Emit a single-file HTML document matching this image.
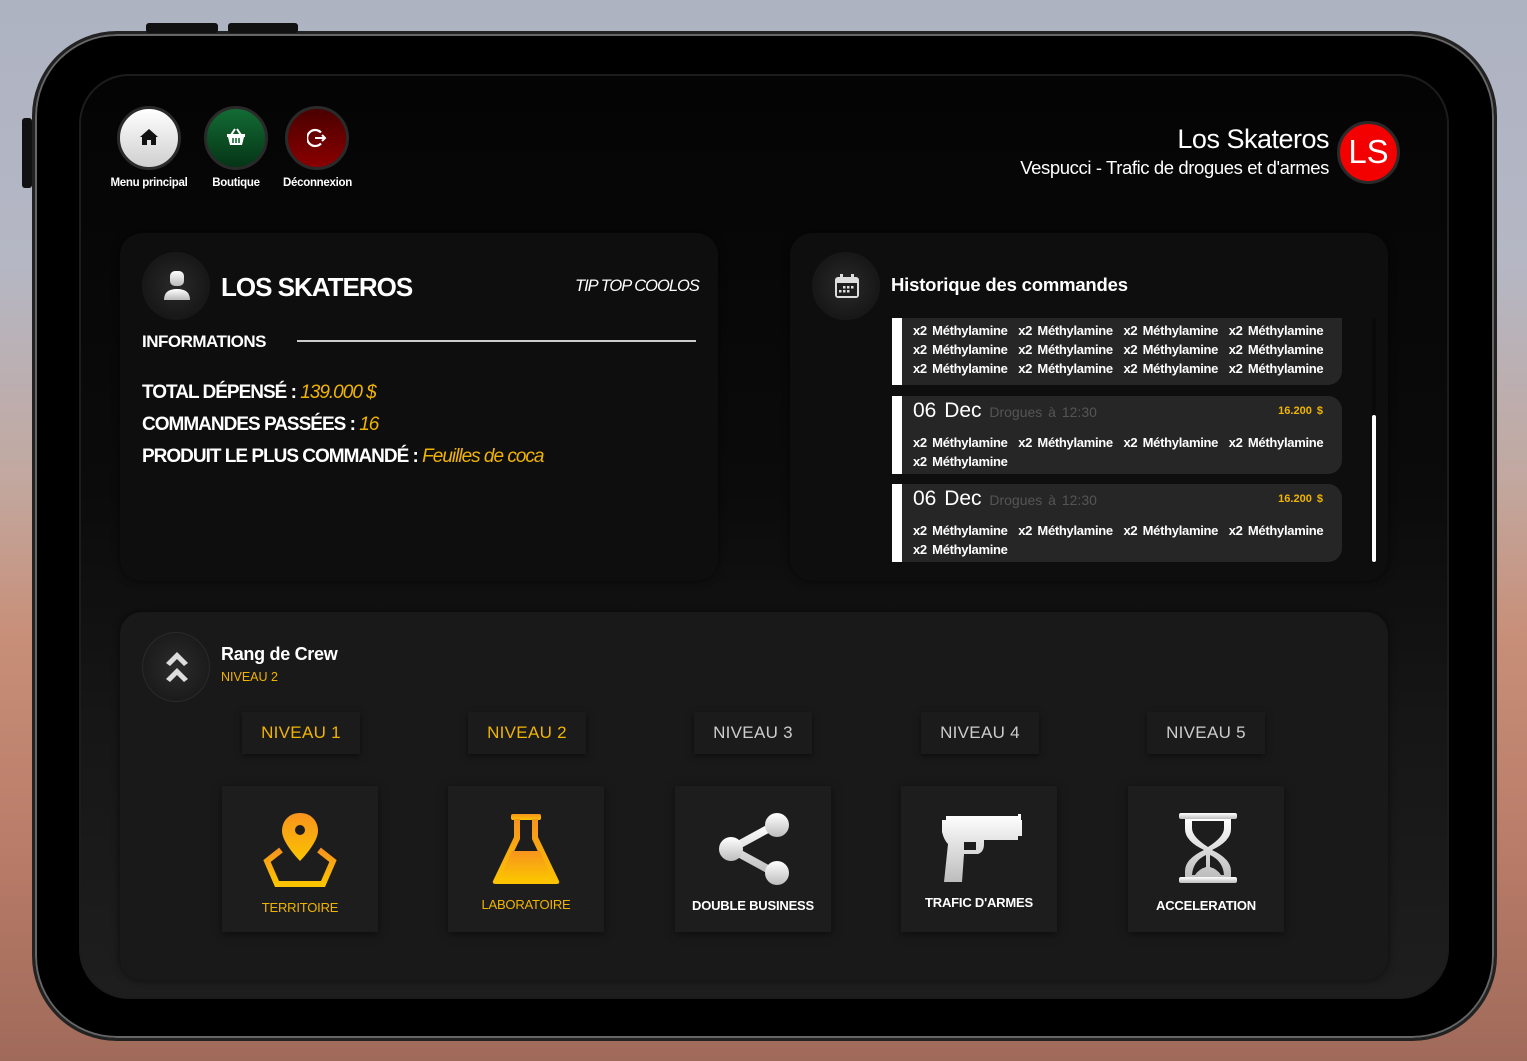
<!DOCTYPE html>
<html><head><meta charset="utf-8">
<style>
*{margin:0;padding:0;box-sizing:border-box}
body{width:1527px;height:1061px;overflow:hidden;position:relative;font-family:"Liberation Sans",sans-serif;
background:linear-gradient(180deg,#aeb3c2 0%,#b5b7c4 25%,#c2a8a0 45%,#c88f78 60%,#b97c68 80%,#a06a5a 100%);}
.abs{position:absolute}
.tablet{left:32px;top:31px;width:1465px;height:1010px;border-radius:85px;background:#000;border:3px solid #222;box-shadow:0 0 0 2px #666 inset}
.screen{left:79px;top:74px;width:1370px;height:925px;border-radius:50px;background:linear-gradient(180deg,#040404 0%,#0b0b0b 45%,#161616 70%,#1e1e1e 100%);border:2px solid #1c1c1c}
.panel{border-radius:22px;background:#0e0e0e;box-shadow:0 0 8px rgba(0,0,0,.6)}
.circ{border-radius:50%;border:3px solid #2a2a2a}
.lbl{color:#fff;font-weight:bold;font-size:11.5px;text-align:center;letter-spacing:-.3px}
.w{color:#fff}
.y{color:#f0b400}
.item{position:absolute;left:892px;width:450px;background:#262626;border-radius:0 14px 14px 0;border-left:10px solid #fff;padding:0 0 0 11px;color:#fff;font-weight:bold;font-size:13px;line-height:19px;letter-spacing:-.3px;word-spacing:2px}
.niv{position:absolute;top:712px;width:118px;height:42px;background:#1b1b1b;box-shadow:0 2px 6px rgba(0,0,0,.5);font-size:17px;text-align:center;line-height:42px;letter-spacing:.3px}
.card{position:absolute;top:786px;width:156px;height:146px;background:#1d1d1d;box-shadow:0 2px 8px rgba(0,0,0,.5)}
.card span{position:absolute;left:0;right:0;text-align:center;font-size:13px;font-weight:bold;letter-spacing:-.2px}
</style></head><body>
<div class="abs tablet"></div>
<div class="abs" style="left:22px;top:118px;width:10px;height:70px;background:#111;border-radius:3px"></div>
<div class="abs" style="left:146px;top:23px;width:72px;height:10px;background:#111;border-radius:3px"></div>
<div class="abs" style="left:228px;top:23px;width:70px;height:10px;background:#111;border-radius:3px"></div>
<div class="abs screen"></div>

<div class="abs circ" style="left:117px;top:106px;width:64px;height:64px;background:linear-gradient(#fff,#cfcfcf)"></div>
<svg class="abs" style="left:139px;top:127px" width="20" height="20" viewBox="0 0 20 20"><path d="M10 2 L19 10 L17 10 L17 18 L12 18 L12 13 L8 13 L8 18 L3 18 L3 10 L1 10Z" fill="#111"/></svg>
<div class="abs circ" style="left:204px;top:106px;width:64px;height:64px;background:linear-gradient(#136b34,#053516)"></div>
<svg class="abs" style="left:226px;top:128px" width="20" height="18" viewBox="0 0 20 18"><path d="M5 7 L9 1 M15 7 L11 1" stroke="#fff" stroke-width="2"/><path d="M1 6 H19 V9 H18 L16 17 H4 L2 9 H1Z" fill="#fff"/><path d="M7 10 V15 M10 10 V15 M13 10 V15" stroke="#136b34" stroke-width="1.6"/></svg>
<div class="abs circ" style="left:285px;top:106px;width:64px;height:64px;background:linear-gradient(#4a0000,#8a0000)"></div>
<svg class="abs" style="left:307px;top:128px" width="20" height="20" viewBox="0 0 20 20"><path d="M14 4.5 A8 8 0 1 0 14 15.5" fill="none" stroke="#fff" stroke-width="2.2"/><path d="M8 10 H18 M15 7 L18 10 L15 13" fill="none" stroke="#fff" stroke-width="2"/></svg>
<div class="abs lbl" style="left:100px;top:177px;width:98px">Menu principal</div>
<div class="abs lbl" style="left:196px;top:177px;width:80px">Boutique</div>
<div class="abs lbl" style="left:270px;top:177px;width:95px">Déconnexion</div>

<div class="abs w" style="right:198px;top:124px;font-size:27px;letter-spacing:-.5px">Los Skateros</div>
<div class="abs w" style="right:198px;top:157px;font-size:18.5px;letter-spacing:-.4px">Vespucci - Trafic de drogues et d'armes</div>
<div class="abs circ" style="left:1337px;top:121px;width:63px;height:63px;background:#f30000;color:#fff;font-size:33px;text-align:center;line-height:56px">LS</div>

<div class="abs panel" style="left:120px;top:233px;width:598px;height:348px"></div>
<div class="abs circ" style="left:142px;top:252px;width:68px;height:68px;background:radial-gradient(#2a2a2a,#111);border-color:#181818"></div>
<svg class="abs" style="left:162px;top:270px" width="30" height="32" viewBox="0 0 30 32"><defs><linearGradient id="g1" x1="0" y1="0" x2="0" y2="1"><stop offset="0" stop-color="#fff"/><stop offset="1" stop-color="#bbb"/></linearGradient></defs><rect x="8" y="1" width="14" height="15" rx="5" fill="url(#g1)"/><path d="M2 30 Q2 19 15 19 Q28 19 28 30Z" fill="url(#g1)"/></svg>
<div class="abs w" style="left:221px;top:272px;font-size:26px;font-weight:bold;letter-spacing:-1px">LOS SKATEROS</div>
<div class="abs w" style="left:575px;top:277px;font-size:16.5px;font-style:italic;letter-spacing:-1px">TIP TOP COOLOS</div>
<div class="abs w" style="left:142px;top:332px;font-size:17px;font-weight:bold;letter-spacing:-.5px">INFORMATIONS</div>
<div class="abs" style="left:297px;top:340px;width:399px;height:2px;background:#ccc"></div>
<div class="abs w" style="left:142px;top:377px;font-size:19px;font-weight:bold;letter-spacing:-1px;line-height:32px">TOTAL DÉPENSÉ : <span class="y" style="font-weight:normal;font-style:italic">139.000 $</span><br>COMMANDES PASSÉES : <span class="y" style="font-weight:normal;font-style:italic">16</span><br>PRODUIT LE PLUS COMMANDÉ : <span class="y" style="font-weight:normal;font-style:italic">Feuilles de coca</span></div>

<div class="abs panel" style="left:790px;top:233px;width:598px;height:348px"></div>
<div class="abs circ" style="left:812px;top:252px;width:68px;height:68px;background:radial-gradient(#2a2a2a,#111);border-color:#181818"></div>
<svg class="abs" style="left:834px;top:273px" width="26" height="26" viewBox="0 0 26 26"><rect x="1" y="4" width="24" height="21" rx="3" fill="#ddd"/><rect x="6" y="1" width="3" height="6" fill="#ddd"/><rect x="17" y="1" width="3" height="6" fill="#ddd"/><rect x="3" y="10" width="20" height="13" fill="#1e1e1e"/><g fill="#ddd"><rect x="9" y="13" width="2.5" height="2.5"/><rect x="13" y="13" width="2.5" height="2.5"/><rect x="17" y="13" width="2.5" height="2.5"/><rect x="5" y="17" width="2.5" height="2.5"/><rect x="9" y="17" width="2.5" height="2.5"/><rect x="13" y="17" width="2.5" height="2.5"/></g></svg>
<div class="abs w" style="left:891px;top:274px;font-size:18.5px;font-weight:bold;letter-spacing:-.2px">Historique des commandes</div>
<div class="abs" style="left:892px;top:318px;width:476px;height:250px;overflow:hidden">
 <div class="item" style="left:0;top:-30px;height:97px;padding-top:33px">x2 Méthylamine&nbsp; x2 Méthylamine&nbsp; x2 Méthylamine&nbsp; x2 Méthylamine<br>x2 Méthylamine&nbsp; x2 Méthylamine&nbsp; x2 Méthylamine&nbsp; x2 Méthylamine<br>x2 Méthylamine&nbsp; x2 Méthylamine&nbsp; x2 Méthylamine&nbsp; x2 Méthylamine</div>
</div>
<div class="item" style="top:396px;height:78px;padding-top:3px"><div style="font-weight:normal;font-size:21px;line-height:24px;letter-spacing:0">06 Dec <span style="font-size:14px;color:#555">Drogues à 12:30</span><span class="y" style="position:absolute;right:19px;top:8px;font-size:11px;font-weight:bold;line-height:14px">16.200 $</span></div><div style="margin-top:9px">x2 Méthylamine&nbsp; x2 Méthylamine&nbsp; x2 Méthylamine&nbsp; x2 Méthylamine<br>x2 Méthylamine</div></div>
<div class="item" style="top:484px;height:78px;padding-top:3px"><div style="font-weight:normal;font-size:21px;line-height:24px;letter-spacing:0">06 Dec <span style="font-size:14px;color:#555">Drogues à 12:30</span><span class="y" style="position:absolute;right:19px;top:8px;font-size:11px;font-weight:bold;line-height:14px">16.200 $</span></div><div style="margin-top:9px">x2 Méthylamine&nbsp; x2 Méthylamine&nbsp; x2 Méthylamine&nbsp; x2 Méthylamine<br>x2 Méthylamine</div></div>
<div class="abs" style="left:1372px;top:318px;width:4px;height:245px;background:#0a0a0a"></div>
<div class="abs" style="left:1372px;top:415px;width:4px;height:147px;background:#fff;border-radius:2px"></div>

<div class="abs panel" style="left:120px;top:612px;width:1268px;height:368px;background:#191919"></div>
<div class="abs circ" style="left:142px;top:632px;width:68px;height:70px;background:radial-gradient(#2c2c2c,#141414);border-color:#2a2a2a;border-width:1px"></div>
<svg class="abs" style="left:163px;top:649px" width="28" height="36" viewBox="0 0 28 36"><path d="M3 14 L14 3 L25 14 L21 17 L14 10 L7 17Z M3 30 L14 19 L25 30 L21 33 L14 26 L7 33Z" fill="#ddd"/></svg>
<div class="abs w" style="left:221px;top:644px;font-size:18px;font-weight:bold;letter-spacing:-.3px">Rang de Crew</div>
<div class="abs y" style="left:221px;top:670px;font-size:12.5px">NIVEAU 2</div>

<div class="niv y" style="left:242px">NIVEAU 1</div>
<div class="niv y" style="left:468px">NIVEAU 2</div>
<div class="niv" style="left:694px;color:#ccc">NIVEAU 3</div>
<div class="niv" style="left:921px;color:#ccc">NIVEAU 4</div>
<div class="niv" style="left:1147px;color:#ccc">NIVEAU 5</div>

<svg width="0" height="0" style="position:absolute"><defs>
<linearGradient id="yo" x1="0" y1="0" x2="0" y2="1"><stop offset="0" stop-color="#f7931e"/><stop offset="1" stop-color="#fbc400"/></linearGradient>
<linearGradient id="gr" x1="0" y1="0" x2="0" y2="1"><stop offset="0" stop-color="#fff"/><stop offset="1" stop-color="#bdbdbd"/></linearGradient></defs></svg>

<div class="card" style="left:222px">
 <svg style="position:absolute;left:40px;top:25px" width="76" height="76" viewBox="0 0 76 76"><path d="M38 2 C27 2 20 10 20 20 C20 32 38 50 38 50 C38 50 56 32 56 20 C56 10 49 2 38 2Z" fill="url(#yo)"/><circle cx="38" cy="19" r="5" fill="#1d1d1d"/><path d="M19 39 L5 50 L15 73 H61 L71 50 L57 39" fill="none" stroke="url(#yo)" stroke-width="6"/></svg>
 <span class="y" style="top:114px;font-weight:normal">TERRITOIRE</span></div>
<div class="card" style="left:448px">
 <svg style="position:absolute;left:44px;top:27px" width="68" height="72" viewBox="0 0 68 72"><rect x="19" y="1" width="30" height="6" rx="2" fill="url(#yo)"/><path d="M22 6 H28 V26 L9 66 H59 L40 26 V6 H46 V24 L67 68 Q68 71 64 71 H4 Q0 71 1 68 L22 24Z" fill="url(#yo)"/><path d="M20 38 H48 L61 67 H7Z" fill="url(#yo)"/></svg>
 <span class="y" style="top:111px;font-weight:normal">LABORATOIRE</span></div>
<div class="card" style="left:675px">
 <svg style="position:absolute;left:42px;top:27px" width="74" height="72" viewBox="0 0 74 72"><path d="M14 36 L58 12 M14 36 L58 60" stroke="url(#gr)" stroke-width="8"/><circle cx="14" cy="36" r="12" fill="url(#gr)"/><circle cx="60" cy="12" r="12" fill="url(#gr)"/><circle cx="60" cy="60" r="12" fill="url(#gr)"/></svg>
 <span class="w" style="top:112px">DOUBLE BUSINESS</span></div>
<div class="card" style="left:901px">
 <svg style="position:absolute;left:37px;top:28px" width="86" height="70" viewBox="0 0 86 70"><path d="M4 6 L8 6 L8 2 H80 V0 H83 V6 H84 V22 H80 V26 H46 V30 Q46 38 40 40 H26 L24 68 H6 L10 30 Q6 26 4 18Z" fill="url(#gr)"/><path d="M26 28 H38 V36 H26Z" fill="#1d1d1d"/></svg>
 <span class="w" style="top:109px">TRAFIC D'ARMES</span></div>
<div class="card" style="left:1128px">
 <svg style="position:absolute;left:49px;top:27px" width="62" height="72" viewBox="0 0 62 72"><rect x="2" y="0" width="58" height="6" rx="2" fill="url(#gr)"/><rect x="2" y="64" width="58" height="6" rx="2" fill="url(#gr)"/><path d="M8 6 L8 16 Q8 28 27 37 Q8 46 8 58 L8 64 H54 V58 Q54 46 35 37 Q54 28 54 16 V6Z" fill="url(#gr)"/><path d="M15 8 V15 Q15 24 31 34 Q47 24 47 15 V8Z" fill="#1d1d1d"/><path d="M15 62 Q16 48 29 42 V54 Q22 56 18 62Z M47 62 Q46 48 33 42 V54 Q40 56 44 62Z" fill="#1d1d1d"/></svg>
 <span class="w" style="top:112px">ACCELERATION</span></div>
</body></html>
